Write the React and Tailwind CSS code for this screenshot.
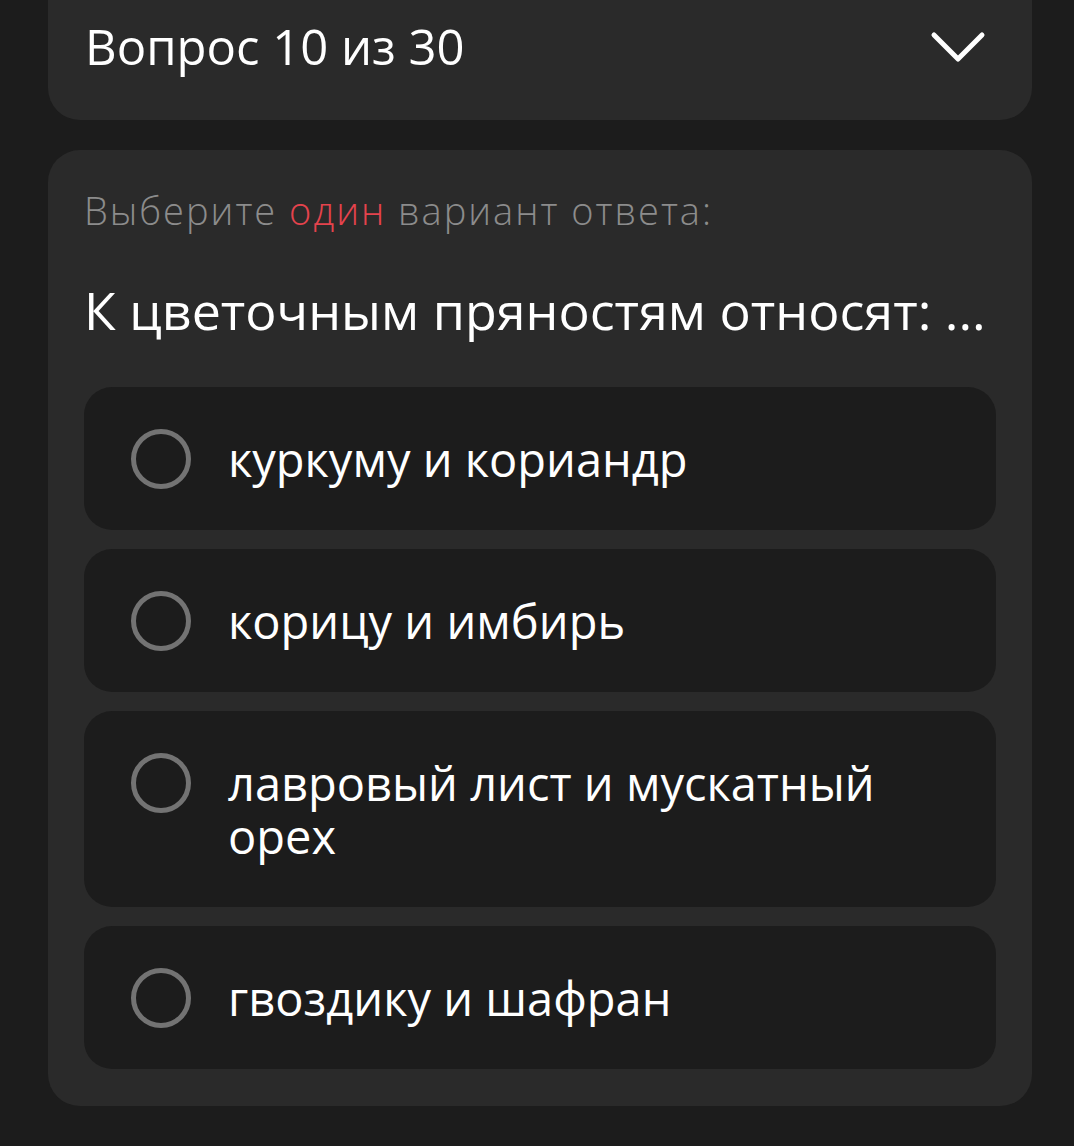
import React from 'react';

const options = [
    'куркуму и кориандр',
    'корицу и имбирь',
    'лавровый лист и мускатный орех',
    'гвоздику и шафран',
];

const Option = ({ label }) => (
    <div className="flex items-start gap-[37px] rounded-[28px] bg-[#1c1c1c] pl-[47px] pr-10 pt-[46px] pb-[44px]">
        <span className="my-[-4px] h-[60px] w-[60px] shrink-0 rounded-full border-[5px] border-[#737373]" />
        <span className="text-[47px] leading-[53px] text-white">{label}</span>
    </div>
);

export default function App() {
    return (
        <div className="min-h-[1146px] bg-[#1c1c1c] pl-12 pr-[42px] pb-10 font-['Open_Sans',sans-serif]">
            <div className="flex h-[120px] items-start justify-between rounded-b-[32px] bg-[#2a2a2a] pl-[37px] pr-[46px] pt-[14px]">
                <h1 className="text-[49px] font-normal leading-[64px] text-white">Вопрос 10 из 30</h1>
                <svg className="mt-[16px]" width="56" height="34" viewBox="0 0 56 34" fill="none">
                    <path d="M4 5 L28 29 L52 5" stroke="white" strokeWidth="5" strokeLinecap="round" strokeLinejoin="round" />
                </svg>
            </div>

            <div className="mt-[30px] rounded-[32px] bg-[#2a2a2a] pl-9 pr-9 pb-[37px] pt-[38px]">
                <p className="text-[38px] font-light leading-[44px] tracking-[2px] text-[#8c8c8c]">
                    Выберите <span className="text-[#e5434d]">один</span> вариант ответа:
                </p>
                <h2 className="mt-[46px] text-[52px] font-normal leading-[64px] text-white">К цветочным пряностям относят: ...</h2>
                <div className="mt-[45px] flex flex-col gap-[19px]">
                    {options.map((o) => (
                        <Option key={o} label={o} />
                    ))}
                </div>
            </div>
        </div>
    );
}
